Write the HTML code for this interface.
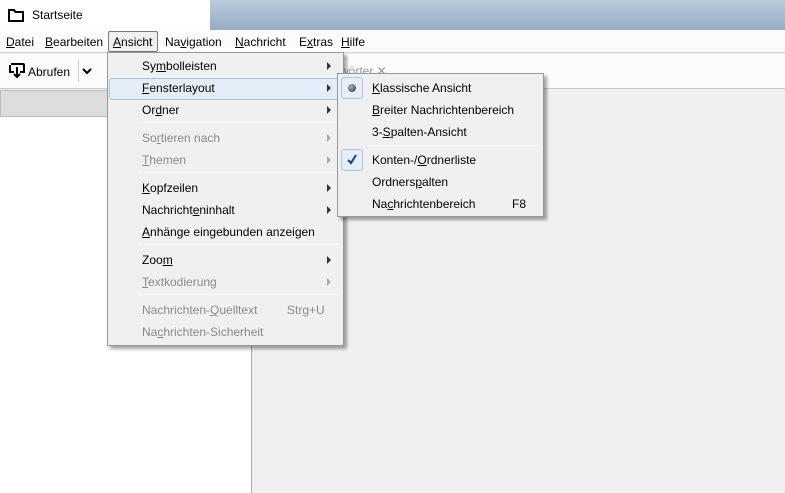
<!DOCTYPE html>
<html><head><style>
*{margin:0;padding:0;box-sizing:border-box}
body{width:785px;height:493px;overflow:hidden;position:relative;font-family:"Liberation Sans",sans-serif;font-size:12px;color:#000;background:#f0f0f0}
.abs{position:absolute}
u{text-decoration:underline}
.menu{position:absolute;background:#f0f0f0;border:1px solid #979797;box-shadow:3px 3px 3px rgba(0,0,0,.35)}
.it{position:absolute;height:22px;line-height:22px;white-space:nowrap}
.dis{color:#8a8a8a}
.arr{position:absolute;width:0;height:0;border-left:4px solid #333;border-top:4px solid transparent;border-bottom:4px solid transparent}
.arr.d{border-left-color:#aaa}
.sep{position:absolute;height:1px;background:#d7d7d7;border-bottom:1px solid #fff}
</style></head><body>
<div class="abs" style="left:0;top:0;width:785px;height:30px;background:linear-gradient(#bccbdb,#95abc4)"></div>
<div class="abs" style="left:0;top:0;width:210px;height:30px;background:#fff"></div>
<svg class="abs" style="left:8px;top:9px" width="16" height="13"><path d="M1 1h5l1.5 2H15v9H1z" fill="none" stroke="#000" stroke-width="2"/></svg>
<div class="abs" style="left:32px;top:8px;font-size:12px">Startseite</div>
<div class="abs" style="left:0;top:30px;width:785px;height:23px;background:#fcfcfc;border-bottom:1px solid #d5d5d5"></div>
<div class="abs" style="left:6px;top:35px;word-spacing:0"><u>D</u>atei</div>
<div class="abs" style="left:45px;top:35px"><u>B</u>earbeiten</div>
<div class="abs" style="left:108px;top:31px;width:50px;height:21px;border:1px solid #7a7a7a;border-radius:2px;background:#f0f0f0"></div>
<div class="abs" style="left:113px;top:35px"><u>A</u>nsicht</div>
<div class="abs" style="left:165px;top:35px">Na<u>v</u>igation</div>
<div class="abs" style="left:235px;top:35px"><u>N</u>achricht</div>
<div class="abs" style="left:299px;top:35px">E<u>x</u>tras</div>
<div class="abs" style="left:341px;top:35px"><u>H</u>ilfe</div>
<div class="abs" style="left:0;top:54px;width:785px;height:35px;background:#fcfcfc;border-bottom:1px solid #c9c9c9"></div>
<svg class="abs" style="left:9px;top:63px" width="16" height="16"><path d="M2 1h12a1 1 0 0 1 1 1v7h-4M5 9H1V2M8 4v10M5 11l3 3 3-3" fill="none" stroke="#000" stroke-width="2"/></svg>
<div class="abs" style="left:28px;top:65px">Abrufen</div>
<div class="abs" style="left:78px;top:60px;width:1px;height:22px;background:#ccc"></div>
<svg class="abs" style="left:82px;top:68px" width="10" height="7"><path d="M1 1l4 4 4-4" fill="none" stroke="#000" stroke-width="2"/></svg>
<div class="abs" style="left:340px;top:64px;color:#999">wörter ✕</div>
<div class="abs" style="left:0;top:90px;width:252px;height:403px;background:#fff;border-right:1px solid #aaa"></div>
<div class="abs" style="left:0;top:90px;width:252px;height:27px;background:#ddd;border:1px solid #bbb"></div>

<div class="menu" style="left:107px;top:52px;width:237px;height:294px">
<div class="abs" style="left:1px;top:25px;width:232px;height:22px;background:#e5eef8;border:1px solid #aac4e6;border-radius:3px"></div>
<div class="it" style="left:34px;top:2px">Sy<u>m</u>bolleisten</div><div class="arr" style="left:219px;top:9px"></div>
<div class="it" style="left:34px;top:24px"><u>F</u>ensterlayout</div><div class="arr" style="left:219px;top:31px"></div>
<div class="it" style="left:34px;top:46px">Or<u>d</u>ner</div><div class="arr" style="left:219px;top:53px"></div>
<div class="sep" style="left:30px;top:69px;width:202px"></div>
<div class="it dis" style="left:34px;top:74px">So<u>r</u>tieren nach</div><div class="arr d" style="left:219px;top:81px"></div>
<div class="it dis" style="left:34px;top:96px"><u>T</u>hemen</div><div class="arr d" style="left:219px;top:103px"></div>
<div class="sep" style="left:30px;top:119px;width:202px"></div>
<div class="it" style="left:34px;top:124px"><u>K</u>opfzeilen</div><div class="arr" style="left:219px;top:131px"></div>
<div class="it" style="left:34px;top:146px">Nachricht<u>e</u>ninhalt</div><div class="arr" style="left:219px;top:153px"></div>
<div class="it" style="left:34px;top:168px"><u>A</u>nhänge eingebunden anzeigen</div>
<div class="sep" style="left:30px;top:191px;width:202px"></div>
<div class="it" style="left:34px;top:196px">Zoo<u>m</u></div><div class="arr" style="left:219px;top:203px"></div>
<div class="it dis" style="left:34px;top:218px"><u>T</u>extkodierung</div><div class="arr d" style="left:219px;top:225px"></div>
<div class="sep" style="left:30px;top:241px;width:202px"></div>
<div class="it dis" style="left:34px;top:246px">Nachrichten-<u>Q</u>uelltext</div><div class="it dis" style="left:179px;top:246px">Strg+U</div>
<div class="it dis" style="left:34px;top:268px">Na<u>c</u>hrichten-Sicherheit</div>
</div>

<div class="menu" style="left:337px;top:73px;width:207px;height:144px">
<div class="abs" style="left:3px;top:3px;width:22px;height:22px;background:#e5eef8;border:1px solid #aac4e6;border-radius:3px"></div>
<div class="abs" style="left:10px;top:10px;width:8px;height:8px;border-radius:50%;background:radial-gradient(circle at 35% 35%,#aab,#334)"></div>
<div class="abs" style="left:3px;top:75px;width:22px;height:22px;background:#e5eef8;border:1px solid #aac4e6;border-radius:3px"></div>
<svg class="abs" style="left:8px;top:80px" width="12" height="12"><path d="M2 6l3 3 5-8" fill="none" stroke="#1a3c8c" stroke-width="2"/></svg>
<div class="it" style="left:34px;top:3px"><u>K</u>lassische Ansicht</div>
<div class="it" style="left:34px;top:25px"><u>B</u>reiter Nachrichtenbereich</div>
<div class="it" style="left:34px;top:47px">3-<u>S</u>palten-Ansicht</div>
<div class="sep" style="left:30px;top:71px;width:172px"></div>
<div class="it" style="left:34px;top:75px">Konten-/<u>O</u>rdnerliste</div>
<div class="it" style="left:34px;top:97px">Ordners<u>p</u>alten</div>
<div class="it" style="left:34px;top:119px">Na<u>c</u>hrichtenbereich</div><div class="it" style="left:174px;top:119px">F8</div>
</div>
</body></html>
